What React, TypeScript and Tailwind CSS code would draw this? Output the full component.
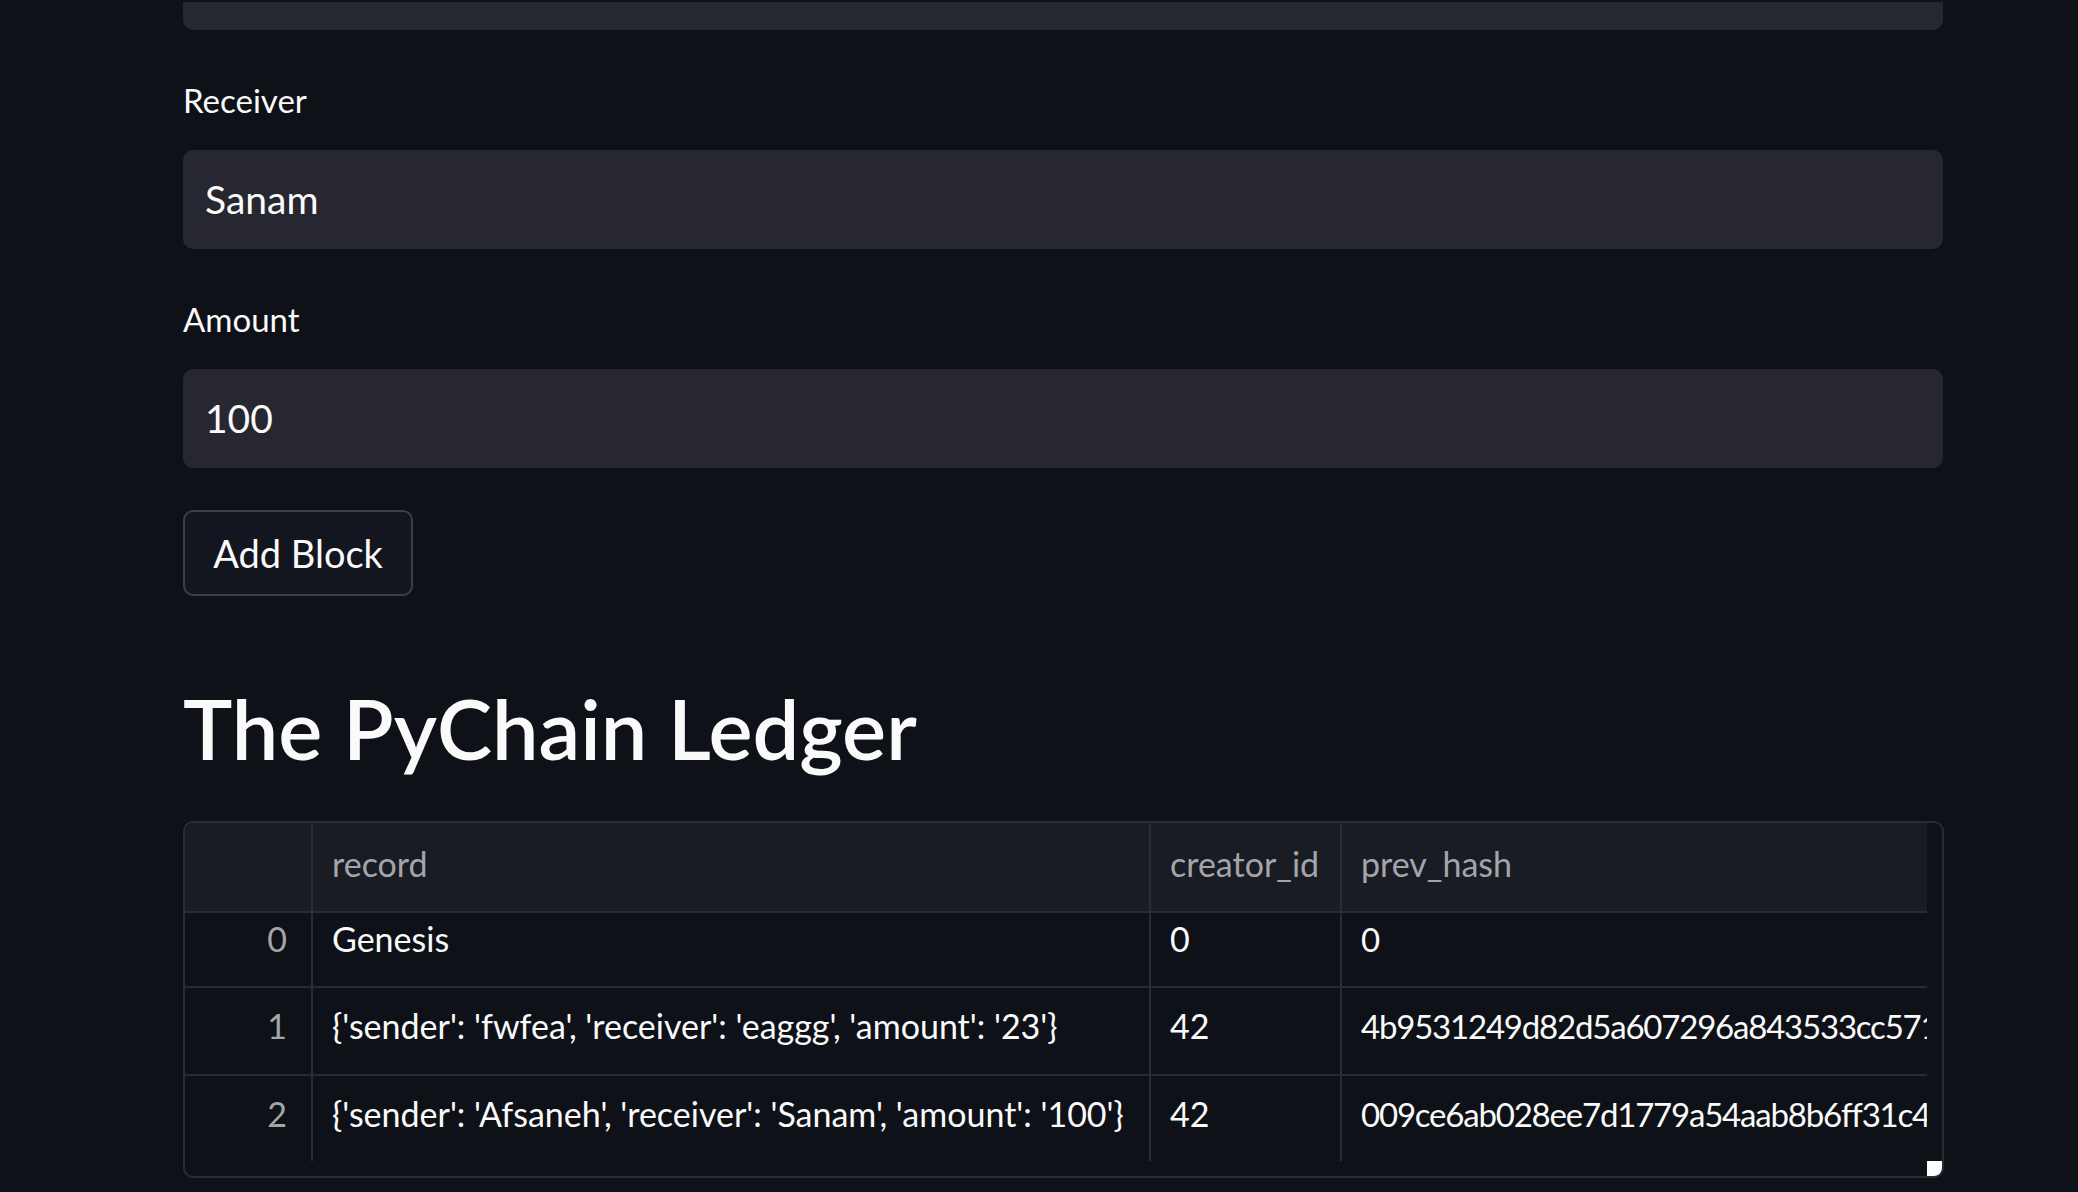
import React from 'react';

const rows = [
  { idx: 0, record: 'Genesis', creator: '0', prev: '0', h: 'h-[75px] border-b-2', pt: 'pt-[6px]' },
  {
    idx: 1,
    record: "{'sender': 'fwfea', 'receiver': 'eaggg', 'amount': '23'}",
    creator: '42',
    prev: '4b9531249d82d5a607296a843533cc5713d2c0e5b8f3a9e1d6c7b2f0a4e8d3c1',
    h: 'h-[88px] border-b-2',
    pt: 'pt-[18px]',
  },
  {
    idx: 2,
    record: "{'sender': 'Afsaneh', 'receiver': 'Sanam', 'amount': '100'}",
    creator: '42',
    prev: '009ce6ab028ee7d1779a54aab8b6ff31c4e2a9d7f05b8c3e16a2d9f4b7e0c5a8',
    h: 'h-[85px]',
    pt: 'pt-[18px]',
  },
];

const Field = ({ label, value }: { label: string; value: string }) => (
  <div>
    <div className="mt-[50px] mb-[30px] h-[40px] text-[33px] leading-[40px] text-[#fafafa]">{label}</div>
    <div className="h-[99px] rounded-[10px] bg-[#262730] px-[22px] flex items-center text-[39px] text-[#fafafa]">
      {value}
    </div>
  </div>
);

const App = () => {
  return (
    <div className="w-full h-[1192px] overflow-hidden bg-[#0e1117] font-['Lato','Noto_Sans',sans-serif]">
      <div className="ml-[183px] w-[1760px]">
        {/* previous input, mostly scrolled away */}
        <div className="mt-[2px] h-[28px] rounded-b-[10px] bg-[#262730]" />

        <Field label="Receiver" value="Sanam" />
        <Field label="Amount" value="100" />

        <button className="mt-[42px] w-[230px] h-[86px] rounded-[10px] border-2 border-[#3d3f47] bg-[#13161e] text-[38px] text-[#fafafa] flex items-center justify-center">
          Add Block
        </button>

        <h2 className="mt-[82px] h-[100px] text-[83px] leading-[100px] font-semibold text-[#fafafa]">
          The PyChain Ledger
        </h2>

        {/* dataframe */}
        <div className="mt-[43px] w-[1761px] h-[357px] border-2 border-[#2a2c33] rounded-[10px] overflow-hidden">
          <div className="flex h-full">
            <div className="w-[1742px] flex flex-col text-[34px] leading-[40px]">
              <div className="h-[90px] flex bg-[#1a1c23] border-b-2 border-[#2a2c33] text-[#a3a5ab]">
                <div className="w-[128px] border-r-2 border-[#2a2c33]" />
                <div className="w-[838px] border-r-2 border-[#2a2c33] pl-[19px] pt-[21px]">record</div>
                <div className="w-[191px] border-r-2 border-[#2a2c33] pl-[19px] pt-[21px]">creator_id</div>
                <div className="w-[585px] pl-[19px] pt-[21px]">prev_hash</div>
              </div>
              {rows.map((r) => (
                <div key={r.idx} className={`flex border-[#2a2c33] ${r.h}`}>
                  <div className={`w-[128px] border-r-2 border-[#2a2c33] pr-[24px] text-right text-[#a3a5ab] ${r.pt}`}>
                    {r.idx}
                  </div>
                  <div className={`w-[838px] border-r-2 border-[#2a2c33] pl-[19px] text-[#fafafa] whitespace-nowrap overflow-hidden ${r.pt}`}>
                    {r.record}
                  </div>
                  <div className={`w-[191px] border-r-2 border-[#2a2c33] pl-[19px] text-[#fafafa] ${r.pt}`}>
                    {r.creator}
                  </div>
                  <div className={`w-[585px] pl-[19px] text-[33px] tracking-[-1.2px] text-[#fafafa] whitespace-nowrap overflow-hidden ${r.pt}`}>
                    {r.prev}
                  </div>
                </div>
              ))}
              <div className="h-[15px]" />
            </div>
            <div className="w-[15px] flex flex-col justify-end">
              <div className="h-[15px] bg-white rounded-br-[6px]" />
            </div>
          </div>
        </div>
      </div>
    </div>
  );
};

export default App;
